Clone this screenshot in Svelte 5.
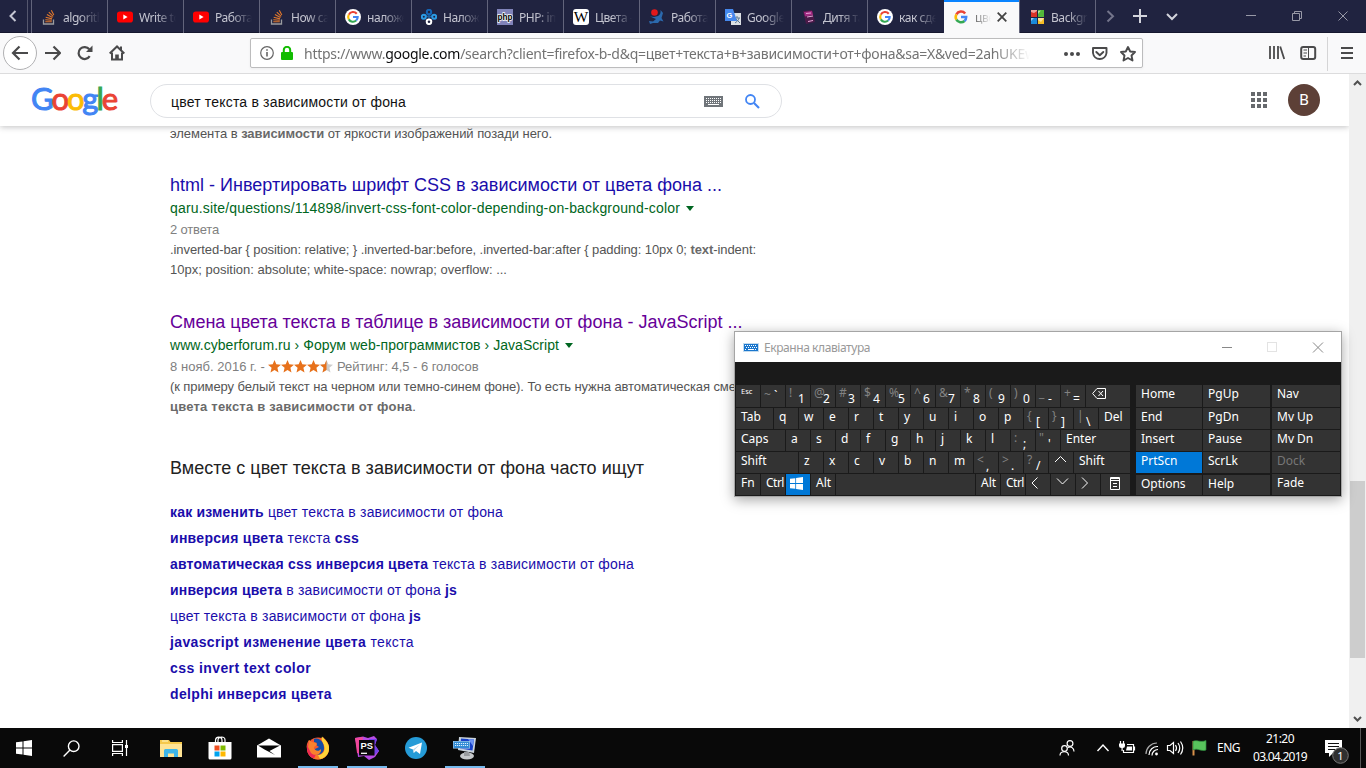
<script>
  const tabs = [
    { icon: 'so', label: 'algorithm' },
    { icon: 'yt', label: 'Write to' },
    { icon: 'yt', label: 'Работа с' },
    { icon: 'so', label: 'How ca' },
    { icon: 'g', label: 'наложе' },
    { icon: 'nodes', label: 'Наложе' },
    { icon: 'php', label: 'PHP: im' },
    { icon: 'wiki', label: 'Цвета —' },
    { icon: 'man', label: 'Работа' },
    { icon: 'tr', label: 'Google П' },
    { icon: 'book', label: 'Дитя та' },
    { icon: 'g', label: 'как сде' },
    { icon: 'gp', label: 'цвет', active: true },
    { icon: 'win', label: 'Backgro' }
  ];

  const related = [
    { w: 333, parts: [['как изменить', 1], [' цвет текста в зависимости от фона', 0]] },
    { w: 189, parts: [['инверсия цвета', 1], [' текста ', 0], ['css', 1]] },
    { w: 464, parts: [['автоматическая css инверсия цвета', 1], [' текста в зависимости от фона', 0]] },
    { w: 287, parts: [['инверсия цвета', 1], [' в зависимости от фона ', 0], ['js', 1]] },
    { w: 251, parts: [['цвет текста в зависимости от фона ', 0], ['js', 1]] },
    { w: 244, parts: [['javascript изменение цвета', 1], [' текста', 0]] },
    { w: 141, parts: [['css invert text color', 1]] },
    { w: 162, parts: [['delphi инверсия цвета', 1]] }
  ];

  const k = (t, w = 24, o = {}) => ({ t, w, ...o });
  const letters = (s) => s.split('').map((c) => k(c));
  const d = (s, t) => k(t, 24, { s });
  const rows = [
    [k('Esc', 24, { cls: 'tiny' }), k('`', 24, { s: '~', cls: 'mid' }), d('!', '1'), d('@', '2'), d('#', '3'), d('$', '4'), d('%', '5'), d('^', '6'), d('&', '7'), d('*', '8'), d('(', '9'), d(')', '0'), d('_', '-'), d('+', '='), k('', 44, { icon: 'bksp' })],
    [k('Tab', 37), ...letters('qwertyuiop'), d('{', '['), d('}', ']'), d('|', '\\'), k('Del', 31)],
    [k('Caps', 49), ...letters('asdfghjkl'), d(':', ';'), d('"', "'"), k('Enter', 69)],
    [k('Shift', 62), ...letters('zxcvbnm'), d('<', ','), d('>', '.'), d('?', '/'), k('', 24, { icon: 'up' }), k('Shift', 56)],
    [k('Fn'), k('Ctrl', 24, { cls: 'snug' }), k('', 24, { icon: 'winkey', cls: 'hot' }), k('Alt'), k('', 139), k('Alt'), k('Ctrl', 24, { cls: 'snug' }), k('', 24, { icon: 'left' }), k('', 24, { icon: 'down' }), k('', 24, { icon: 'right' }), k('', 29, { icon: 'menu' })]
  ];
  const side = [
    ['Home', 'PgUp', 'Nav'],
    ['End', 'PgDn', 'Mv Up'],
    ['Insert', 'Pause', 'Mv Dn'],
    ['PrtScn', 'ScrLk', 'Dock'],
    ['Options', 'Help', 'Fade']
  ];

  const starPath = 'M6.5 0L8.3 4.3L13 4.7L9.4 7.8L10.5 12.4L6.5 9.9L2.5 12.4L3.6 7.8L0 4.7L4.7 4.3Z';

  // Spreads the letters so that a line takes the given width.
  function fit(node, width) {
    const n = node.textContent.length;
    node.style.letterSpacing = (width - node.getBoundingClientRect().width) / n + 'px';
  }
</script>

{#snippet gmark()}
  <path d="M12.4 4.2A5.6 5.6 0 0 0 3.1 5.2" stroke="#ea4335" />
  <path d="M3.1 5.2A5.6 5.6 0 0 0 3.1 10.8" stroke="#fbbc05" />
  <path d="M3.1 10.8A5.6 5.6 0 0 0 11.7 12.2" stroke="#34a853" />
  <path d="M11.7 12.2A5.6 5.6 0 0 0 13.5 8H8" stroke="#4285f4" />
{/snippet}

{#snippet favicon(name)}
  <svg class="fav" viewBox="0 0 16 16" width="16" height="16">
    {#if name === 'so'}
      <path d="M2.5 10.5V15H12.500V10.500" fill="none" stroke="#9a9c9f" stroke-width="1.300" />
      <path d="M4.300 12.800H10.800M4.300 10.700L10.800 11.300M4.700 8.300L11 9.900M5.900 5.600L11.500 8.600M7.800 3.200L12.200 7.400M10.300 1.300L12.800 6" stroke="#e0772c" stroke-width="1.100" />
    {:else if name === 'yt'}
      <rect x="0" y="2.500" width="16" height="11" rx="2.800" fill="#f00" /><path d="M6.300 5.500V10.500L10.600 8Z" fill="#fff" />
    {:else if name === 'g'}
      <circle cx="8" cy="8" r="8" fill="#fff" /><g fill="none" stroke-width="2.500" transform="translate(1.200 1.200) scale(.85)">{@render gmark()}</g>
    {:else if name === 'gp'}
      <g fill="none" stroke-width="2.700" transform="translate(.5 .5) scale(.94)">{@render gmark()}</g>
    {:else if name === 'nodes'}
      <g fill="none" stroke-width="2"><path d="M8 5V10M5 7L8 8L11 7" stroke="#1b5fa0" stroke-width="1.500" /><circle cx="8" cy="3" r="2.200" stroke="#1565b4" /><circle cx="2.800" cy="7.800" r="2" stroke="#2b9be4" /><circle cx="13.200" cy="7.800" r="2" stroke="#2b9be4" /><circle cx="8" cy="12.800" r="2.300" stroke="#fff" /></g>
    {:else if name === 'php'}
      <rect width="16" height="16" fill="#8083b9" /><text x="8" y="11" text-anchor="middle" font-size="9.500" font-weight="700" textLength="15" lengthAdjust="spacingAndGlyphs" stroke="#fff" stroke-width="1.500" paint-order="stroke" font-family="Liberation Sans, sans-serif">php</text>
    {:else if name === 'wiki'}
      <rect width="16" height="16" rx="3" fill="#fff" /><text x="8" y="13" text-anchor="middle" font-size="14" textLength="14.500" lengthAdjust="spacingAndGlyphs" font-family="Liberation Serif, serif">W</text>
    {:else if name === 'man'}
      <circle cx="5.500" cy="3.500" r="3.300" fill="#e3191b" /><path d="M9 7C11 6 12 4 11.500 1L14 4L12.500 9L14.500 12.500L11 11.500L9 14H4L1 15L0 12L4 12.500L7 10L1 7.500L5 8Z" fill="#2b69ad" />
    {:else if name === 'tr'}
      <rect x="6" y="4" width="10" height="12" fill="#dce0e4" /><path d="M9 9H15M12 7V9M14 9C13.500 12 11 13 10 14M11 10L15 14" stroke="#607b94" fill="none" /><path d="M0 0H8L12 12H0Z" fill="#4588ed" /><text x="1.500" y="8.500" font-size="7.500" font-weight="700" fill="#fff" font-family="Liberation Sans, sans-serif">G</text>
    {:else if name === 'book'}
      <path d="M2 2L11 1L14 13L5 15Z" fill="#4a1a48" /><path d="M3 3L11 2L12 6L4 7.500Z" fill="#a32b82" /><path d="M5 4.500L10 4M6 8L12 7M7 12.500L12 11.500" stroke="#e6a4d8" />
    {:else if name === 'win'}
      <rect x="2" y="1" width="6" height="7" fill="#da3328" /><rect x="9" y="1" width="6" height="7" fill="#52b83a" /><rect x="2" y="9" width="6" height="6" fill="#1b8ad8" /><rect x="9" y="9" width="6" height="6" fill="#f6bd25" /><path d="M2 3L5 4L8 2V1H2ZM9 2L12 1.500L9 5ZM2 9H5L2 12ZM9 11L12 13L15 9H9Z" fill="#fff" opacity=".55" />
    {/if}
  </svg>
{/snippet}

<div class="screen">
  <div class="tabbar">
    <div class="scroll-left"><svg width="8" height="12" viewBox="0 0 8 12"><path d="M6.500 1L1.500 6L6.500 11" /></svg></div>
    {#each tabs as tab}
      <div class="tab" class:active={tab.active}>
        {@render favicon(tab.icon)}
        <span class="tab-label">{tab.label}</span>
        {#if tab.active}<svg class="tab-close" width="10" height="10" viewBox="0 0 10 10"><path d="M.7 .7L9.300 9.300M9.300 .7L.7 9.300" /></svg>{/if}
      </div>
    {/each}
    <div class="tab-tools">
      <svg width="270" height="33" viewBox="1096 0 270 33">
        <path d="M1107.500 11L1113 16.300L1107.500 21.500" stroke="#74758b" stroke-width="2" />
        <path d="M1133 16H1147M1140 9V23" stroke="#d3d4dc" stroke-width="2" />
        <path d="M1167 14L1172 19L1177 14" stroke="#d3d4dc" stroke-width="2" />
        <path d="M1246 15.500H1256M1292.500 13.500H1299.500V20.500H1292.500ZM1294.500 13V11.500H1301.500V18.500H1300M1338.500 11.500L1347.500 20.500M1347.500 11.500L1338.500 20.500" stroke="#9899a7" stroke-width="1" />
      </svg>
    </div>
  </div>

  <div class="toolbar">
    <div class="nav">
      <span class="back"><svg width="18" height="16" viewBox="0 0 18 16"><path d="M2 8H17M8.500 1.500L2 8L8.500 14.500" /></svg></span>
      <svg width="16" height="16" viewBox="0 0 16 16"><path d="M0 8H15M8.500 1.500L15 8L8.500 14.500" /></svg>
      <svg width="16" height="16" viewBox="0 0 16 16"><path d="M12.700 11.200A6 6 0 1 1 12.300 4.300" stroke-width="2.200" /><path d="M15.500 .5V7H9Z" fill="#4a4a4b" stroke="none" /></svg>
      <svg width="16" height="16" viewBox="0 0 16 16"><path d="M.7 8.500L8 1.500L15.300 8.500" stroke-width="2" /><path d="M3 7.500V14.500H13V7.500M12 1.500V5" stroke-width="2" /><path d="M6.200 15V9.500H9.800V15Z" fill="#4a4a4b" stroke="none" /></svg>
    </div>
    <div class="urlbar">
      <svg width="14" height="14" viewBox="0 0 14 14" fill="none" stroke="#666"><circle cx="7" cy="7" r="6.300" stroke-width="1.200" /><path d="M7 6V10.500M7 3.300V4.700" stroke-width="1.600" /></svg>
      <svg class="lock" width="12" height="14" viewBox="0 0 12 14"><path d="M2.800 7V4A3.200 3.200 0 0 1 9.200 4V7" fill="none" stroke="#12bc00" stroke-width="2" /><rect y="6" width="12" height="8" rx="1" fill="#12bc00" /></svg>
      <div class="url"><span class="url-text" use:fit={735}>https://www.<b>google.com</b>/search?client=firefox-b-d&amp;q=цвет+текста+в+зависимости+от+фона&amp;sa=X&amp;ved=2ahUKEwi</span></div>
      <svg class="url-icons" width="74" height="18" viewBox="0 0 74 18">
        <g fill="#4a4a4b"><circle cx="3" cy="9" r="2" /><circle cx="9" cy="9" r="2" /><circle cx="15" cy="9" r="2" /></g>
        <g fill="none" stroke="#4a4a4b" stroke-width="1.900" stroke-linejoin="round"><path d="M30 3H43.500V8A6.800 6.800 0 0 1 30 8Z" /><path d="M33.300 7L36.800 10.300L40.300 7" stroke-linecap="round" /><path d="M65 2L67.200 6.500L72 7L68.500 10.500L69.500 15.500L65 13L60.500 15.500L61.500 10.500L58 7L62.800 6.500Z" /></g>
      </svg>
    </div>
    <div class="right-icons">
      <svg width="97" height="34" viewBox="0 0 97 34" fill="none" stroke="#4a4a4b" stroke-width="2">
        <path d="M2 9V22M6 9V22M10 9V22M12.200 9.500L16.200 22" stroke-width="1.800" /><rect x="33.200" y="10" width="14" height="12" rx="2" /><path d="M40.500 10V22M35.500 13H39M35.500 16H39M35.500 19H38" stroke-width="1" /><path d="M59.500 0V34" stroke="#d5d5d6" stroke-width="1" /><path d="M73 11H85M73 16H85M73 21H85" />
      </svg>
    </div>
  </div>

  <div class="viewport">
    <div class="page">
      <header>
        <div class="logo"><span use:fit={85}><i class="b">G</i><i class="r">o</i><i class="y">o</i><i class="b">g</i><i class="g">l</i><i class="r">e</i></span></div>
        <div class="search">
          <span class="query" use:fit={235}>цвет текста в зависимости от фона</span>
          <svg class="kb" width="19" height="11" viewBox="0 0 19 11"><rect width="19" height="11" fill="#70757a" /><path d="M2 2.500H17M2 4.500H17M2 6.500H17" stroke="#fff" stroke-dasharray="1 1" /><path d="M4 8.500H15" stroke="#fff" /></svg>
          <svg width="15" height="15" viewBox="0 0 15 15" fill="none" stroke="#4285f4" stroke-width="1.800"><circle cx="5.500" cy="5.500" r="4.500" /><path d="M9 9L14 14" stroke-width="2.100" /></svg>
        </div>
        <div class="account">
          <svg width="16" height="16" viewBox="0 0 16 16" fill="#66696d"><path d="M0 0h4v4H0zM6 0h4v4H6zM12 0h4v4h-4zM0 6h4v4H0zM6 6h4v4H6zM12 6h4v4h-4zM0 12h4v4H0zM6 12h4v4H6zM12 12h4v4h-4z" /></svg>
          <span class="avatar">В</span>
        </div>
      </header>
      <main>
        <div class="line"><span use:fit={382}>элемента в <b>зависимости</b> от яркости изображений позади него.</span></div>
        <article>
          <h3><span use:fit={552}>html - Инвертировать шрифт CSS в зависимости от цвета фона ...</span></h3>
          <cite><span use:fit={510}>qaru.site/questions/114898/invert-css-font-color-depending-on-background-color</span><i class="caret"></i></cite>
          <div class="line meta"><span use:fit={49}>2 ответа</span></div>
          <div class="line"><span use:fit={586}>.inverted-bar &#123; position: relative; &#125; .inverted-bar:before, .inverted-bar:after &#123; padding: 10px 0; <b>text</b>-indent:</span></div>
          <div class="line"><span use:fit={337}>10px; position: absolute; white-space: nowrap; overflow: ...</span></div>
        </article>
        <article class="second">
          <h3 class="visited"><span use:fit={572.5}>Смена цвета текста в таблице в зависимости от фона - JavaScript ...</span></h3>
          <cite><span use:fit={389}>www.cyberforum.ru › Форум web-программистов › JavaScript</span><i class="caret"></i></cite>
          <div class="line meta"><span use:fit={95}>8 нояб. 2016 г. -</span>
            <svg class="stars" width="65" height="13" viewBox="0 0 65 13">
              {#each [0, 1, 2, 3] as i}<path d={starPath} fill="#e7711b" transform="translate({i * 13} 0)" />{/each}
              <path d={starPath} fill="#ccc" transform="translate(52 0)" /><path d="M58.500 0V9.900L54.500 12.400L55.600 7.800L52 4.700L56.700 4.300Z" fill="#e7711b" />
            </svg>
            <span use:fit={141.5}>Рейтинг: 4,5 - 6 голосов</span></div>
          <div class="line"><span use:fit={580}>(к примеру белый текст на черном или темно-синем фоне). То есть нужна автоматическая смена</span></div>
          <div class="line"><span use:fit={246}><b>цвета текста в зависимости от фона</b>.</span></div>
        </article>
        <h2><span use:fit={474}>Вместе с цвет текста в зависимости от фона часто ищут</span></h2>
        <ul>
          {#each related as r}
            <li><span use:fit={r.w}>{#each r.parts as [text, bold]}{#if bold}<b>{text}</b>{:else}{text}{/if}{/each}</span></li>
          {/each}
        </ul>
      </main>
    </div>
    <div class="scrollbar">
      <svg width="9" height="6" viewBox="0 0 9 6"><path d="M1 5L4.500 1.500L8 5" /></svg>
      <div class="thumb"></div>
      <svg width="9" height="6" viewBox="0 0 9 6"><path d="M1 1L4.500 4.500L8 1" /></svg>
    </div>
  </div>

  <div class="taskbar">
    <div class="slot sys"><svg width="16" height="16" viewBox="0 0 16 16" fill="#fff"><path d="M0 2.300L6.500 1.400V7.500H0ZM7.500 1.200L16 0V7.500H7.500ZM0 8.500H6.500V14.600L0 13.700ZM7.500 8.500H16V16L7.500 14.800Z" /></svg></div>
    <div class="slot sys"><svg width="17" height="17" viewBox="0 0 17 17" fill="none" stroke="#fff" stroke-width="1.400"><circle cx="10.700" cy="6.200" r="5.300" /><path d="M7 10L.6 16.400" /></svg></div>
    <div class="slot sys"><svg width="17" height="16" viewBox="0 0 17 16" fill="none" stroke="#fff" stroke-width="1.200"><path d="M.6 0V2.500H10.400V0M.6 4.600H10.400V11.400H.6ZM.6 16V13.500H10.400V16M14.500 0V16" /><path d="M13 5H16V8H13Z" fill="#fff" stroke="none" /></svg></div>
    <div class="slot first"><svg width="22" height="19" viewBox="0 0 22 19"><path d="M0 1H9L10.500 3H22V18H0Z" fill="#f6c84c" /><path d="M0 5H22V18H0Z" fill="#ffe394" /><path d="M4 18V11.500Q4 10 5.500 10H16.500Q18 10 18 11.500V18H14V14.500H8V18Z" fill="#3eb5e8" /><path d="M2 2H8" stroke="#fff5c5" /></svg></div>
    <div class="slot"><svg width="24" height="24" viewBox="0 0 24 24"><path d="M7.500 7V4.500C7.500 0 14 0 14 4.500V7M10 7V4C10 0 17 0 17 4V7" fill="none" stroke="#fff" stroke-width="1.200" /><path d="M.5 6H23.500V22Q23.500 23.500 22 23.500H2Q.5 23.500 .5 22Z" fill="#fff" /><path d="M6.500 9.500H11.500V14.500H6.500Z" fill="#f05023" /><path d="M12.500 9.500H17.500V14.500H12.500Z" fill="#7fba00" /><path d="M6.500 15.500H11.500V20.500H6.500Z" fill="#00a3ee" /><path d="M12.500 15.500H17.500V20.500H12.500Z" fill="#ffb800" /></svg></div>
    <div class="slot"><svg width="24" height="20" viewBox="0 0 24 20"><path d="M0 7.500L12 .5L24 7.500V19.500H0Z" fill="#fff" /><path d="M1 7.500H23L12.500 13L18 17L7.500 11.500Z" fill="#080808" /></svg></div>
    <div class="slot open"><svg width="24" height="24" viewBox="0 0 24 24"><circle cx="12" cy="12.500" r="11" fill="#f5582f" /><path d="M1 13A11 11 0 0 0 12 23.500C19 23.500 23 18 23 12C23 7 20 4 17 1C15 5 19 8 19 13C18 18 13 20 9 18C5 16 5 12 6 9L3 4C1 7 0 10 1 13Z" fill="#fb7727" /><path d="M1 13A11 11 0 0 0 8 22.800L10 18C6 17 5 13 6 9L3 5C1 8 1 11 1 13Z" fill="#ed2853" /><path d="M16 .5C14 5 19 8 18.500 13C18 17 15 19 12 19L14 23C20 22 23.500 17 23 11C22 6 19 4 16 .5Z" fill="#ffd438" /><path d="M8 3C13 1 18 6 18 12C18 16 15 18.500 12 18.500C8 18.500 6 15.500 6.500 12L9 13L13 11L10 9L11 7L8 6Z" fill="#124ea7" /><path d="M3 4L6 6L10 7L11 9L8 11C8 15 13 16 15 13C16 18 9 21 5 17L2 11Z" fill="#f9812d" /></svg></div>
    <div class="slot open"><svg width="24" height="24" viewBox="0 0 24 24"><path d="M0 2L8 .5L13 2L19 0L22 3L20 9L24 15L20 21L14 24L9 20L3 21L2 12Z" fill="#b74be5" /><path d="M0 2L8 1L6 18L2 17Z" fill="#f0479b" /><path d="M14 3L22 3L20 9L24 15L18 20Z" fill="#7641ea" /><path d="M4 4H19.500V19.500H4Z" fill="#0b090c" /><text x="5.500" y="13" font-size="9.500" font-weight="700" fill="#fff" textLength="12.500" lengthAdjust="spacingAndGlyphs" font-family="Liberation Sans, sans-serif">PS</text><path d="M6 17.300H12" stroke="#fff" stroke-width="1.300" /></svg></div>
    <div class="slot"><svg width="22" height="22" viewBox="0 0 22 22"><circle cx="11" cy="11" r="11" fill="#259bd7" /><path d="M3.500 10.800L17 5.500L15 17L11 14L8.800 16L8 12.500Z" fill="#fff" /><path d="M8 12.500L15 7.500L9.500 13L8.800 16Z" fill="#b8d6e8" /></svg></div>
    <div class="slot open"><svg width="24" height="24" viewBox="0 0 24 24"><path d="M6 1L23 2L21 17L5 14Z" fill="#cbd4dd" /><path d="M8 2.500L21 3.500L19.500 14.500L7 12.500Z" fill="#1640c9" /><path d="M15 3L21 3.500L20 10Z" fill="#6d94f4" /><ellipse cx="14" cy="20" rx="7" ry="3.500" fill="#c6c9cb" /><path d="M11 16H16L17 20H11Z" fill="#989b9e" /><rect y="5" width="17" height="7.500" fill="#b9d8ee" /><rect x=".5" y="5.500" width="16" height="6.500" fill="#328bd5" /><path d="M2 7.500H15M2 9.500H15" stroke="#d9f0ff" stroke-dasharray="1.200 .8" /></svg></div>
    <div class="tray">
      <svg width="175" height="40" viewBox="1055 728 175 40" fill="none" stroke="#fff" stroke-width="1.200">
        <circle cx="1070" cy="743.500" r="2.900" /><path d="M1068 747.500C1071 746 1074 748 1074 751.500" /><circle cx="1064.500" cy="748.500" r="2.800" /><path d="M1060 755.500C1060 750.500 1068.500 750.500 1068.500 755.500" />
        <path d="M1097.500 751L1103 745L1108.500 751" stroke-width="1.400" />
        <path d="M1127 744.500H1133.500V752.500H1123.500V750" /><path d="M1127 746.500H1132V750.500H1126Z" fill="#fff" stroke="none" /><path d="M1134.500 746.500V750.500M1120.500 741V744M1123.500 741V744" /><path d="M1119 743.500H1125V746Q1125 748 1122.700 748V751H1121.500V748Q1119 748 1119 746Z" fill="#fff" stroke="none" />
        <g stroke="#aaa"><path d="M1146 754A11 11 0 0 1 1157 743" /></g><path d="M1149 755A8.500 8.500 0 0 1 1158 746.500M1152 755.500A6 6 0 0 1 1158 749.500" /><circle cx="1156.500" cy="754" r="1.400" fill="#fff" stroke="none" />
        <path d="M1167.500 745.500H1170L1173.500 742.500V753.500L1170 750.500H1167.500ZM1175.500 745Q1177.500 748 1175.500 751M1178 743Q1181.500 748 1178 753M1180.500 741.500Q1185 748 1180.500 754.500" />
        <path d="M1193.500 741V755.500" stroke="#d9904a" stroke-width="2" /><path d="M1193 741.500C1196 739 1200 743 1206 740.500V750C1201 752 1198 747.500 1193 750Z" fill="#58c45c" stroke="#2d8a3c" stroke-width=".7" />
      </svg>
      <span class="lang"><span use:fit={23}>ENG</span></span>
      <div class="clock"><span use:fit={28}>21:20</span><span use:fit={54}>03.04.2019</span></div>
      <svg class="notice" width="24" height="26" viewBox="0 0 24 26"><path d="M0 0H17V13H8L4 17V13H0Z" fill="#fff" /><path d="M3 3.500H14M3 6.500H14M3 9.500H10" stroke="#111" /><circle cx="15.500" cy="15.500" r="7.800" fill="#303030" stroke="#777" /><text x="15.500" y="19.500" text-anchor="middle" font-size="11" fill="#fff">1</text></svg>
    </div>
  </div>

  <div class="osk">
    <div class="osk-title">
      <svg width="16" height="9" viewBox="0 0 16 9"><rect width="16" height="9" fill="#c4dcef" /><rect x="1" y="1" width="14" height="7" fill="#1976cd" /><path d="M2 2.500H14M3 4.500H14M2 6.500H4M12 6.500H14" stroke="#fff" stroke-dasharray="1 1" /><path d="M5 6.500H11" stroke="#fff" /></svg>
      <span use:fit={106}>Екранна клавіатура</span>
      <svg class="osk-ctl" width="103" height="11" viewBox="0 0 103 11" fill="none"><path d="M0 5.500H10" stroke="#888" /><rect x="45.500" y=".5" width="9" height="9" stroke="#e3e3e3" /><path d="M91 .5L101 10.500M101 .5L91 10.500" stroke="#888" /></svg>
    </div>
    <div class="keys">
      <div class="left">
        {#each rows as row}
          <div class="krow">
            {#each row as key}
              <div class="key {key.cls ?? ''}" class:dual={key.s} style="width:{key.w}px">
                {#if key.s}<em>{key.s}</em>{/if}
                {#if key.t}<span>{key.t}</span>{/if}
                {#if key.icon === 'bksp'}<svg class="bk" width="14" height="11" viewBox="0 0 14 11"><path d="M5 .5H13.500V10.500H5L.6 5.500ZM6.500 3L11 8M11 3L6.500 8" /></svg>
                {:else if key.icon === 'winkey'}<svg class="wk" width="13" height="13" viewBox="0 0 16 16"><path d="M0 2.300L6.500 1.400V7.500H0ZM7.500 1.200L16 0V7.500H7.500ZM0 8.500H6.500V14.600L0 13.700ZM7.500 8.500H16V16L7.500 14.800Z" /></svg>
                {:else if key.icon === 'up'}<svg class="ar" width="13" height="13" viewBox="0 0 13 13"><path d="M1 9L6.500 3.500L12 9" /></svg>
                {:else if key.icon === 'down'}<svg class="ar" width="13" height="13" viewBox="0 0 13 13"><path d="M1 3.500L6.500 9L12 3.500" /></svg>
                {:else if key.icon === 'left'}<svg width="13" height="13" viewBox="0 0 13 13"><path d="M6.500 .5L1 6L6.500 11.500" /></svg>
                {:else if key.icon === 'right'}<svg width="13" height="13" viewBox="0 0 13 13"><path d="M1 .5L6.500 6L1 11.500" /></svg>
                {:else if key.icon === 'menu'}<svg class="mn" width="10" height="13" viewBox="0 0 10 13"><path d="M.5 .5H9.500V12.500H.5ZM0 1.500H10M0 3.500H10M3 6.500H7M3 9.500H7" /></svg>{/if}
              </div>
            {/each}
          </div>
        {/each}
      </div>
      <div class="side">
        {#each side as row}
          {#each row as label}
            <div class="key" class:hot={label === 'PrtScn'} class:off={label === 'Dock'} class:low={label === 'Options' || label === 'Help'}><span>{label}</span></div>
          {/each}
        {/each}
      </div>
    </div>
  </div>
</div>

<style>
  :global(body) { overflow: hidden; }
  .screen { position: relative; width: 1366px; height: 768px; display: flex; flex-direction: column; overflow: hidden; background: #fff; font-family: "Noto Sans", sans-serif; }
  svg { display: block; flex: none; }
  span { white-space: pre; }

  .tabbar { height: 33px; flex: none; display: flex; background: #202340; box-shadow: inset 0 -1px #15172e; }
  .scroll-left { width: 31px; box-sizing: border-box; padding: 10px 0 0 9px; background: linear-gradient(#55576e, #55576e) 27px 0 / 1px 33px no-repeat; }
  .scroll-left svg { fill: none; stroke: #c5c6d2; stroke-width: 2; }
  .tab { position: relative; width: 76px; box-sizing: border-box; border-left: 1px solid #62647b; padding-left: 9px; display: flex; align-items: center; }
  .tab-label { width: 37px; margin-left: 6px; overflow: hidden; font-size: 12px; line-height: 20px; padding-top: 2px; letter-spacing: -.45px; color: #c4c5d0; -webkit-mask-image: linear-gradient(90deg, #000 45%, transparent 100%); mask-image: linear-gradient(90deg, #000 45%, transparent 100%); }
  .active { background: #f9f9fa; box-shadow: inset 0 2px #0a84ff; border-color: #202340; }
  .active .tab-label { width: 16px; color: #555; margin-right: 6px; -webkit-mask-image: linear-gradient(90deg, #000d, transparent); mask-image: linear-gradient(90deg, #000d, transparent); }
  .tab-close { fill: none; stroke: #444; stroke-width: 1.800; }
  .tab-tools { border-left: 1px solid #62647b; }
  .tab-tools svg { fill: none; }

  .toolbar { height: 40px; flex: none; display: flex; background: #f9f9fa; border-bottom: 1px solid #dcdcdd; }
  .nav { width: 250px; display: flex; align-items: center; gap: 16px; padding-left: 3px; box-sizing: border-box; }
  .nav svg { fill: none; stroke: #4a4a4b; stroke-width: 2.200; }
  .back { width: 32px; height: 32px; border: 1px solid #b1b1b3; border-radius: 50%; background: #fff; display: grid; place-items: center; margin-right: -8px; }
  .urlbar { width: 893px; height: 30px; box-sizing: border-box; margin-top: 5px; border: 1px solid #bcbcbd; border-radius: 2px; background: #fff; display: flex; align-items: center; padding-left: 9px; box-shadow: 0 1px 3px #0000000d; }
  .lock { margin: 0 11px 0 7px; }
  .url { width: 726px; overflow: hidden; font-size: 14px; line-height: 26px; color: #737373; padding-top: 1px; -webkit-mask-image: linear-gradient(90deg, #000 95%, transparent); mask-image: linear-gradient(90deg, #000 95%, transparent); }
  .url-text { display: inline-block; }
  .url b { font-weight: 400; color: #0c0c0d; }
  .url-icons { margin: 1px 5px 0 auto; }
  .right-icons { margin: 4px 0 0 125px; }

  .viewport { height: 654px; flex: none; display: flex; font-family: "Liberation Sans", Arial, sans-serif; }
  .page { width: 1349px; overflow: hidden; }
  header { position: relative; z-index: 1; height: 52px; display: flex; align-items: center; background: #fff; box-shadow: 0 1px 6px #20212447; }
  .logo { width: 150px; box-sizing: border-box; padding: 0 0 5px 31px; font: 400 31px/40px Lato, sans-serif; -webkit-text-stroke: 1px; }
  .logo span { display: inline-block; }
  .logo i { font-style: normal; }
  .b { color: #4285f4; -webkit-text-stroke-color: #4285f4; } .r { color: #ea4335; -webkit-text-stroke-color: #ea4335; } .y { color: #fbbc05; -webkit-text-stroke-color: #fbbc05; } .g { color: #34a853; -webkit-text-stroke-color: #34a853; }
  .search { width: 632px; height: 34px; box-sizing: border-box; border: 1px solid #dfe1e5; border-radius: 17px; margin-top: 2px; display: flex; align-items: center; padding-left: 20px; font-size: 14px; color: #111; }
  .query { display: inline-block; margin-top: 1px; }
  .kb { margin: 0 22px 0 298px; }
  .account { margin-left: auto; margin-right: 29px; display: flex; align-items: center; gap: 21px; }
  .avatar { width: 32px; height: 32px; border-radius: 50%; background: #5d4037; color: #fff; display: grid; place-items: center; font: 15.500px/32px Roboto, sans-serif; }
  main { margin-top: -2px; padding-left: 170px; color: #545454; }
  main span { display: inline-block; }
  .line { height: 20px; font-size: 13px; line-height: 20px; display: flex; white-space: nowrap; }
  .line b { color: #6a6a6a; }
  .meta { color: #808080; }
  .stars { margin: 3px 4px 0 3px; }
  h3 { margin: 29px 0 2px; font-size: 18px; line-height: 24px; height: 24px; font-weight: 400; color: #1a0dab; }
  .second h3 { margin-top: 30px; }
  h3.visited { color: #609; }
  cite { display: flex; height: 18px; margin-bottom: 3px; font-size: 14px; line-height: 18px; font-style: normal; color: #006621; }
  .caret { border: 4px solid transparent; border-top: 5px solid #006621; border-bottom: 0; margin: 7px 0 0 6px; height: 0; }
  h2 { margin: 39px 0 0; font-size: 18px; line-height: 24px; height: 24px; font-weight: 400; color: #222; }
  ul { list-style: none; margin: 19px 0 0; padding: 0; }
  li { height: 26px; font-size: 14px; line-height: 26px; color: #1a0dab; }

  .scrollbar { width: 17px; background: #f0f0f0; display: flex; flex-direction: column; align-items: center; padding: 6px 0; box-sizing: border-box; }
  .scrollbar svg { fill: none; stroke: #505050; stroke-width: 2; }
  .thumb { width: 15px; height: 177px; background: #cdcdcd; margin: 395px 0 auto; }

  .taskbar { height: 40px; flex: none; background: #090909; display: flex; color: #fff; }
  .slot { width: 49px; display: grid; place-items: center; }
  .slot:not(.sys) svg { margin-left: -1px; }
  .sys { width: 48px; }
  .sys:nth-child(2) svg { margin-left: -1px; }
  .first { margin-left: 3px; }
  .open { background: linear-gradient(#76b9ed, #76b9ed) 4px 38px / 40px 2px no-repeat; }
  .tray { margin-left: auto; width: 311px; display: flex; font-size: 12px; box-shadow: inset -5px 0 #090909, inset -6px 0 #555; }
  .lang { width: 23px; margin-left: -13px; line-height: 40px; }
  .lang span, .clock span { display: inline-block; }
  .clock { width: 54px; margin-left: 13px; display: flex; flex-direction: column; align-items: center; line-height: 18px; padding-top: 2px; }
  .notice { margin: 12px 0 0 18px; }

  .osk { position: absolute; left: 734px; top: 331px; width: 606px; height: 164px; border: 1px solid #a5a5a5; background: #1a1a1a; box-shadow: 0 3px 12px #00000059; display: flex; flex-direction: column; }
  .osk-title { height: 30px; flex: none; background: #fff; display: flex; align-items: center; padding-left: 8px; color: #999; font-size: 12px; }
  .osk-title span { margin-left: 5px; display: inline-block; }
  .osk-ctl { margin-left: auto; margin-right: 16px; }
  .keys { display: flex; margin-top: 23px; padding-left: 1px; }
  .left { width: 400px; display: grid; grid-template-rows: 22px repeat(4, 21px); row-gap: 1px; }
  .krow { display: flex; gap: 1px; }
  .key { position: relative; box-sizing: border-box; background: #333; color: #fff; padding-left: 5px; font-size: 12px; line-height: 18px; overflow: hidden; }
  .side { display: grid; grid-template-columns: 66px 67px 68px; grid-template-rows: 22px repeat(4, 21px); gap: 1px; }
  .side .key:nth-child(3n) { margin-left: 1px; margin-right: -1px; }
  .side .low { margin-top: 1px; }
  .hot { background: #0078d7; }
  .off { color: #777; }
  .tiny { font-size: 7.500px; line-height: 12px; }
  .snug { letter-spacing: -.5px; }
  .dual { padding: 5px 0 0 12px; }
  .key em { position: absolute; left: 3px; top: -1px; font-style: normal; color: #828282; }
  .key.mid { padding-top: 2px; padding-left: 13px; }
  .mid em { top: 1px; }
  .key svg { fill: none; stroke: #fff; margin-top: 3px; }
  .key .bk { margin: 3px 0 0 1px; }
  .key .ar { margin-top: 1px; }
  .key .wk { fill: #fff; stroke: none; margin: 3px 0 0 -1px; }
  .key .mn { margin-left: 4px; }
</style>
